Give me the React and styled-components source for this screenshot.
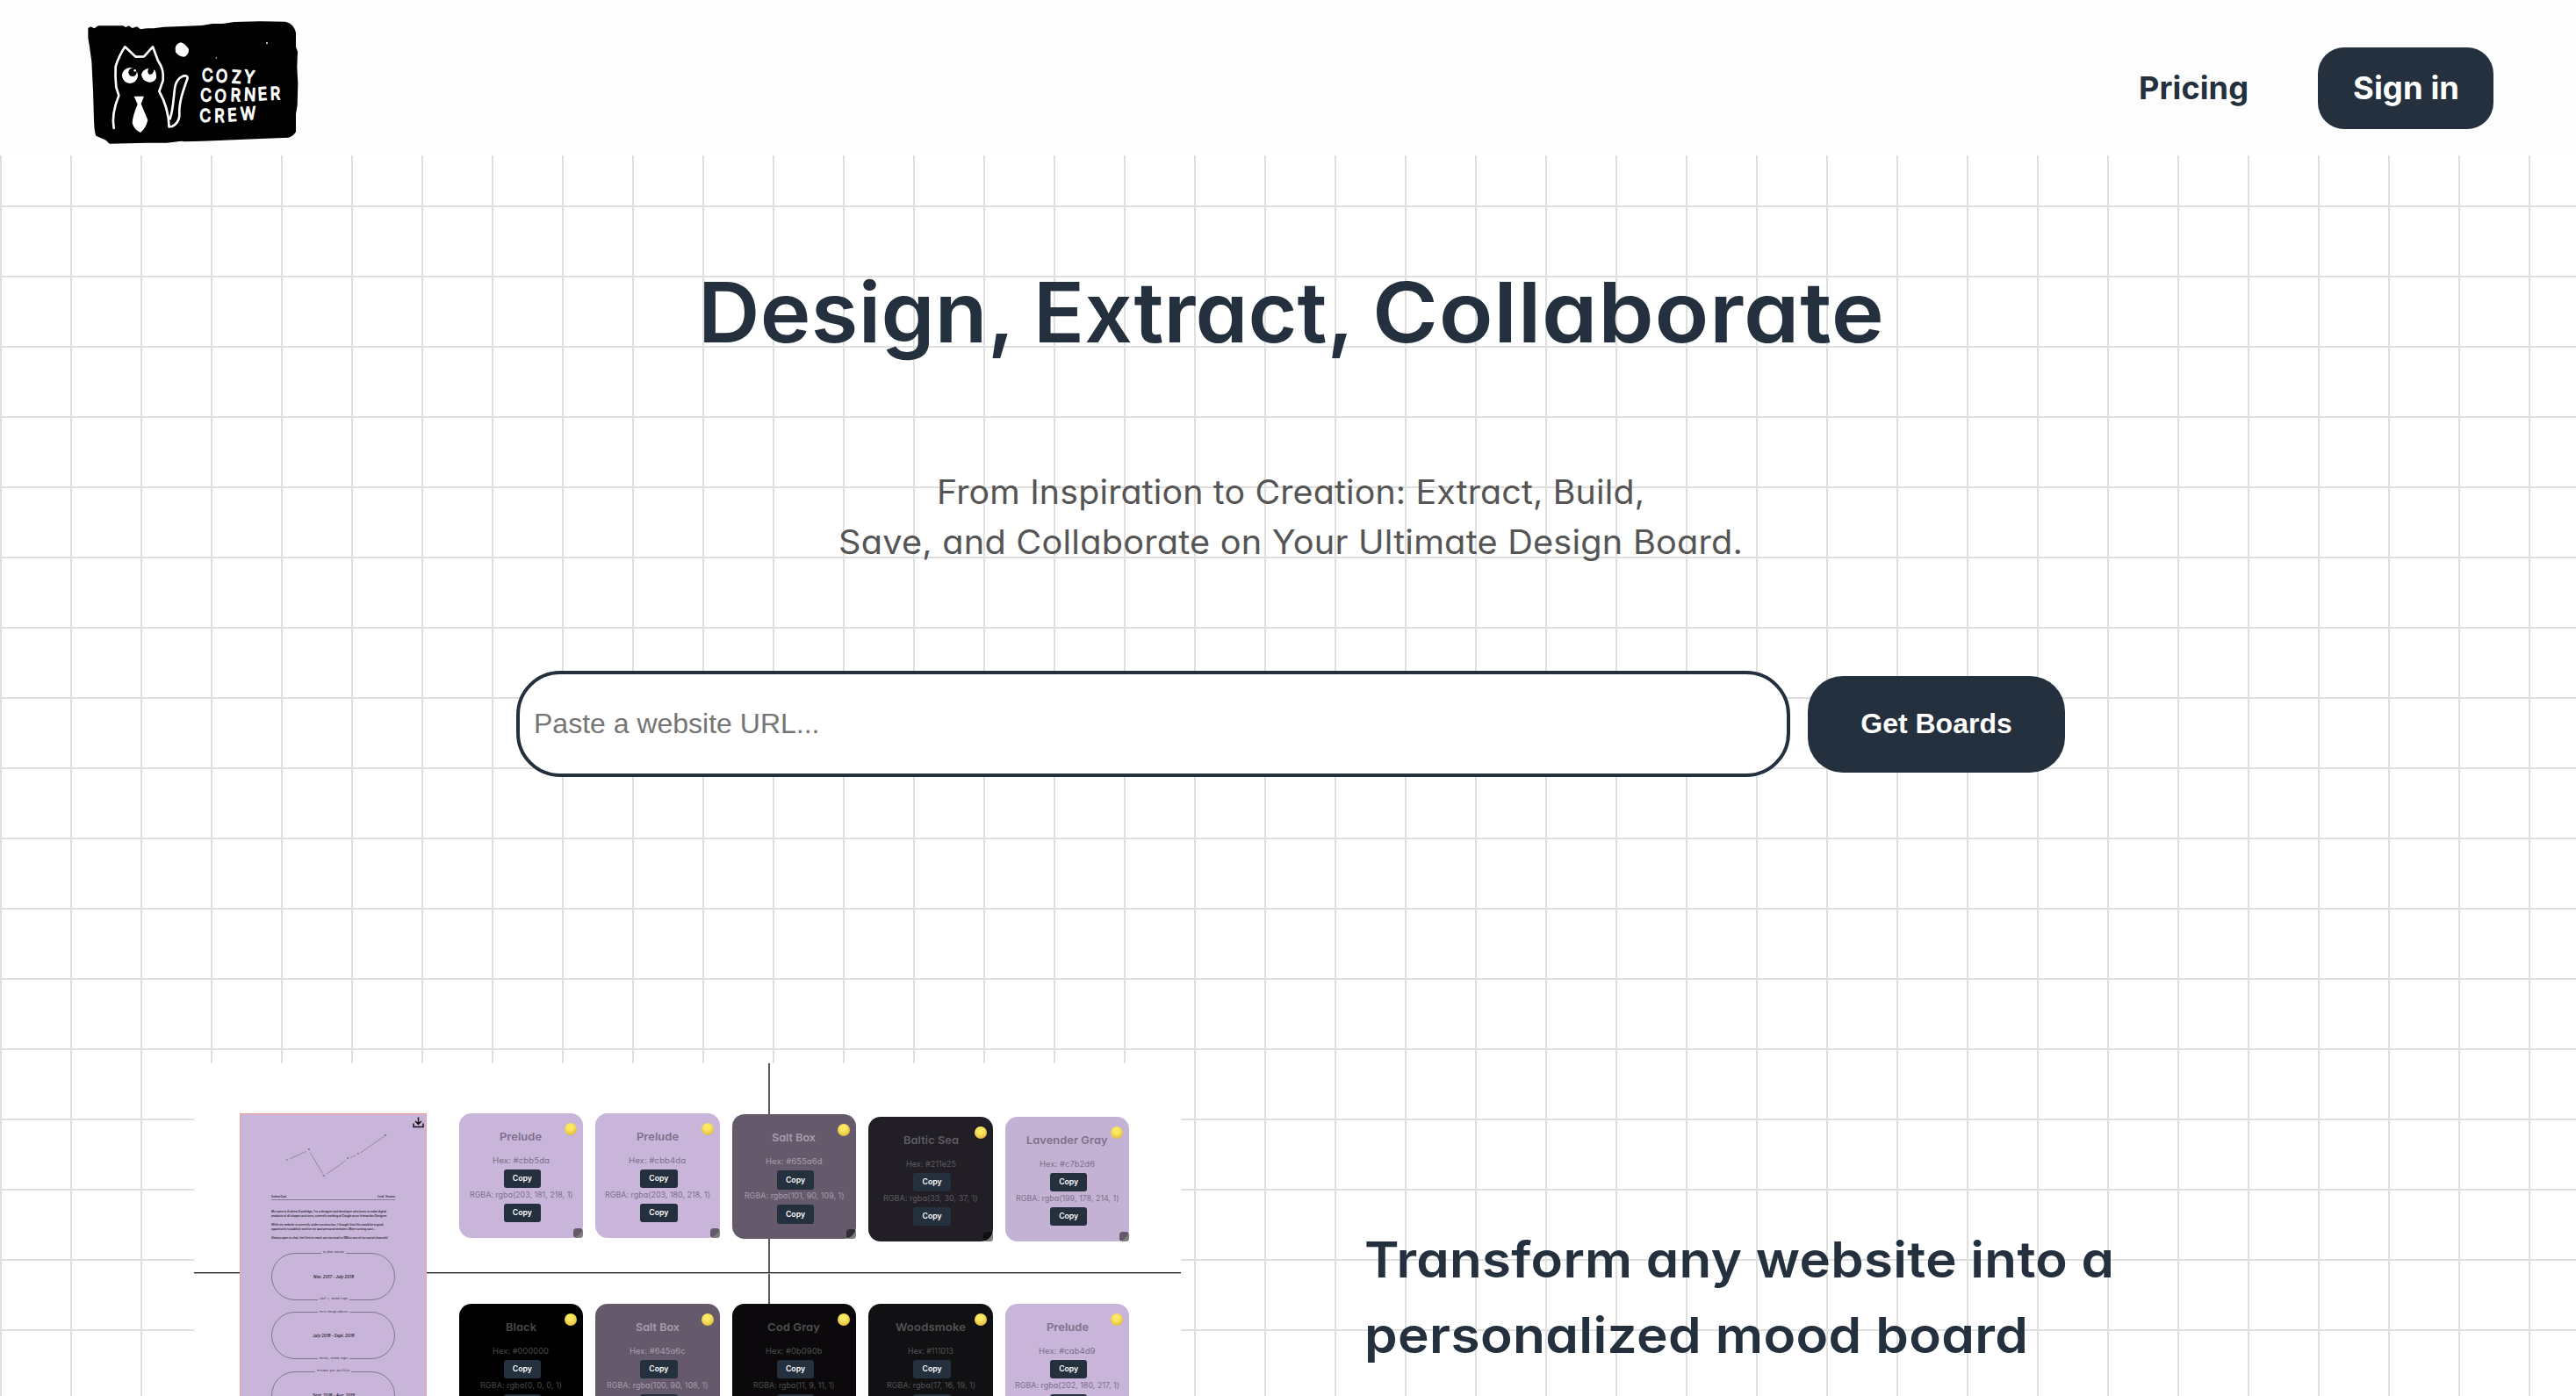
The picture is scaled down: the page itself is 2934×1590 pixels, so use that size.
import React, { useLayoutEffect, useRef, useState } from 'react';
import styled, { createGlobalStyle } from 'styled-components';

const INK = '#24303e';
const LINE = '#dfdfdf';

const GlobalStyle = createGlobalStyle`
  *, *::before, *::after { box-sizing: border-box; }
  body {
    margin: 0;
    background: #fff;
    color: ${INK};
    font-family: Inter, "Open Sans", sans-serif;
    font-feature-settings: "cv11" 1;
    overflow: hidden;
  }
  h1, h2, h3, p { margin: 0; font-weight: inherit; }
`;

const Page = styled.div`
  width: 2934px;
  height: 1590px;
  overflow: hidden;
  background-color: #fff;
  background-image:
    linear-gradient(to right, ${LINE} 2px, transparent 2px),
    linear-gradient(to bottom, ${LINE} 2px, transparent 2px);
  background-size: 80px 80px;
  background-position: 0 74px;
`;

const Measure = styled.span`
  display: block;
  text-align: left;
`;

const Stretched = styled.span`
  display: inline-block;
  vertical-align: top;
  white-space: pre;
  transform-origin: 0 50%;
`;

/* Widens one line of text to a given measure, mostly in the letters and a little between them. */
function Line({ measure, children }) {
  const ref = useRef(null);
  const [fit, setFit] = useState({ scale: 1, spacing: 0 });
  useLayoutEffect(() => {
    const natural = ref.current.getBoundingClientRect().width;
    const gaps = children.length - 1;
    const width = natural + (measure - natural) * 0.15;
    setFit({ scale: measure / width, spacing: (width - natural) / gaps });
  }, [measure, children]);
  return (
    <Measure style={{ width: measure }}>
      <Stretched ref={ref} style={{ letterSpacing: fit.spacing, transform: `scaleX(${fit.scale})` }}>
        {children}
      </Stretched>
    </Measure>
  );
}

/* ---------- header ---------- */

const Header = styled.header`
  display: flex;
  justify-content: space-between;
  align-items: flex-start;
  height: 177px;
  padding: 0 94px 0 80px;
  background: #fdfdfd;
`;

const LogoArt = styled.svg`
  width: 280px;
  height: 160px;
  margin-top: 10px;
`;

const Nav = styled.nav`
  display: flex;
  align-items: center;
  gap: 79px;
  margin-top: 54px;
  height: 93px;
  font-size: 35.5px;
  font-weight: 650;
`;

const NavLink = styled.a`
  color: ${INK};
`;

const SignIn = styled.button`
  display: flex;
  align-items: center;
  justify-content: center;
  width: 200px;
  height: 93px;
  padding: 0;
  border: 0;
  border-radius: 30px;
  background: ${INK};
  color: #fff;
  font: inherit;
  font-feature-settings: inherit;
`;

const LogoText = styled.text`
  font-family: Inter, sans-serif;
  font-size: 60px;
  font-weight: 400;
  fill: #fff;
  stroke: #fff;
  stroke-width: 4;
  stroke-linejoin: round;
`;

function Logo() {
  return (
    <LogoArt viewBox="0 0 840 480">
      <path
        d="M61 66 L70 61 L82 67 L96 58 L180 58 L190 63 L200 58 L212 66 L228 61 L240 70 L262 67 L284 67 L320 62 L380 60 L450 57 L486 51 L520 51 L560 45 L650 43 L735 44 Q764 50 771 82 L771 130 L777 146 L775 200 L778 255 L776 330 L771 360 L771 420 Q764 434 746 440 L650 444 L560 448 L450 452 L390 454 L380 452 L330 458 L260 458 L134 461 L122 449 L88 434 Q82 420 81 380 L78 280 L73 180 L66 130 L61 100 Z"
        fill="#000"
      />
      <g fill="none" stroke="#fff" strokeLinecap="round" strokeLinejoin="round">
        <path d="M149 408 C142 370 150 335 166 296 L157 268 C154 240 154 215 155 197 Q168 158 187 130 L224 164 L252 163 L282 130 L300 178 C315 200 319 215 317 245 L304 282 C322 314 336 350 338 403" strokeWidth="8" />
        <path d="M337 400 Q341 404 348 402 Q370 392 373 366 C370 320 386 280 401 237 Q401 226 385 230 Q364 238 358 266 C352 310 352 345 341 376" strokeWidth="8" />
      </g>
      <circle cx="204" cy="228" r="27" fill="#fff" />
      <circle cx="213" cy="217" r="14" fill="#000" />
      <circle cx="221" cy="211" r="4" fill="#fff" />
      <path d="M243 224 Q247 207 268 203 Q261 218 270 224 Q284 227 286 208 Q295 214 294 236 Q288 251 270 251 Q246 248 243 224 Z" fill="#fff" />
      <path d="M218 299 L252 299 L242 325 L265 380 Q259 407 240 423 Q220 416 212 391 Q213 366 230 326 Z" fill="#fff" />
      <path d="M377 115 Q391 117 405 138 Q406 158 390 164 Q372 165 360 148 Q354 121 377 115 Z" fill="#fff" />
      <circle cx="672" cy="117" r="3" fill="#fff" />
      <circle cx="499" cy="168" r="2" fill="#fff" />
      <g transform="scale(0.88 1)">
        <LogoText x="513 564 626 673" y="250 250 253 251" rotate="-5 3 3 6">COZY</LogoText>
        <LogoText x="507 560 622 674 730 777" y="318 318 315 313 313 311" rotate="-5 2 2 3 -3 -2">CORNER</LogoText>
        <LogoText x="504 560 612 662" y="388 387 385 380" rotate="-4 0 -3 -3">CREW</LogoText>
      </g>
    </LogoArt>
  );
}

/* ---------- hero ---------- */

const Hero = styled.section`
  display: flex;
  flex-direction: column;
  align-items: center;
  height: 1034px;
  padding: 107px 0 0 6px;
`;

const Title = styled.h1`
  display: flex;
  gap: 21px;
  font-size: 95px;
  line-height: 144px;
  font-weight: 640;
`;

const Subtitle = styled.p`
  display: flex;
  flex-direction: column;
  align-items: center;
  margin-top: 104px;
  font-size: 37.5px;
  line-height: 57px;
  color: #555;
`;

const UrlForm = styled.form`
  display: flex;
  align-items: center;
  gap: 20px;
  margin-top: 118px;
`;

const UrlInput = styled.input`
  width: 1451px;
  height: 121px;
  padding: 0 16px;
  border: 4px solid ${INK};
  border-radius: 50px;
  background: #fff;
  font: 32px "Liberation Sans", Arial, sans-serif;
  &::placeholder { color: #757575; opacity: 1; }
`;

const GetBoards = styled.button`
  width: 293px;
  height: 110px;
  padding: 0;
  border: 0;
  border-radius: 40px;
  background: ${INK};
  color: #fff;
  font: bold 32px "Liberation Sans", Arial, sans-serif;
`;

/* ---------- feature ---------- */

const Feature = styled.section`
  display: flex;
  align-items: flex-start;
  height: 379px;
  padding-left: 221px;
  gap: 209px;
`;

const Board = styled.div`
  display: flex;
  align-items: flex-start;
  width: 1124px;
  height: 379px;
  padding: 57px 0 0 52px;
  gap: 36.5px;
  overflow: hidden;
  background:
    linear-gradient(#202020, #202020) 0 238px / 100% 1px no-repeat,
    linear-gradient(#b4b4b4, #b4b4b4) 0 239px / 100% 1px no-repeat,
    linear-gradient(#5a5a5a, #5a5a5a) 654px 0 / 2px 100% no-repeat,
    #fff;
`;

const Poster = styled.div`
  position: relative;
  flex: none;
  width: 213px;
  height: 500px;
  padding: 0 35px;
  border: 1px solid #f0a593;
  background: #cab5da;
  color: #2a2430;
`;

const DownloadIcon = styled.svg`
  position: absolute;
  top: 3px;
  right: 2px;
  width: 13px;
  height: 13px;
`;

const Constellation = styled.svg`
  display: block;
  width: 139.5px;
  height: 92px;
  overflow: visible;
  font-family: Inter, sans-serif;
`;

const PosterBar = styled.div`
  display: flex;
  justify-content: space-between;
  height: 6px;
  border-bottom: 1px solid #8b7b97;
  font-size: 3.2px;
  line-height: 5px;
  font-weight: 600;
`;

const PosterText = styled.p`
  display: flex;
  flex-direction: column;
  margin-top: ${(p) => p.$top}px;
  font-size: 3.2px;
  line-height: 5px;
  font-weight: 600;
`;

const Pill = styled.div`
  display: flex;
  flex-direction: column;
  align-items: center;
  justify-content: space-between;
  height: 54px;
  margin-top: ${(p) => p.$top}px;
  border: 0.7px solid #84748f;
  border-radius: 27px;
`;

const PillLabel = styled.span`
  margin: -2.5px 0;
  padding: 0 2px;
  background: #cab5da;
  font: 500 2.8px/4px "Liberation Mono", monospace;
`;

const PillDate = styled.span`
  font-size: 4.7px;
  line-height: 6px;
  font-weight: 600;
  font-style: italic;
`;

const Swatches = styled.div`
  display: flex;
  flex-direction: column;
`;

const SwatchRow = styled.div`
  display: flex;
  align-items: flex-start;
  gap: 14px;
  height: 217px;
`;

const Swatch = styled.div`
  position: relative;
  display: flex;
  flex: none;
  flex-direction: column;
  align-items: center;
  width: 141.6px;
  height: 142px;
  margin-top: ${(p) => p.$drop || 0}px;
  padding-top: 18px;
  border-radius: 14px;
  background: ${(p) => p.$bg};
  color: ${(p) => p.$fg};
  font-size: 9px;
  line-height: 13px;
`;

const SwatchName = styled.h3`
  margin-bottom: 11px;
  font-size: 12.3px;
  line-height: 18px;
  font-weight: 640;
`;

const Copy = styled.button`
  width: 42.4px;
  height: 21.3px;
  margin: 4.2px 0 0.4px 3px;
  padding: 0;
  border: 0;
  border-radius: 3px;
  background: ${INK};
  color: #fff;
  font: 600 8.7px/21px Inter, sans-serif;
`;

const Moon = styled.span`
  position: absolute;
  top: 11px;
  right: 7px;
  width: 14px;
  height: 14px;
  border-radius: 50%;
  background: radial-gradient(circle at 45% 35%, #fbe964 0 25%, #edca48 62%, #bf9130 100%);
`;

const Handle = styled.span`
  position: absolute;
  right: 0;
  bottom: 0;
  width: 11px;
  height: 11px;
  border-radius: 3.5px;
  background: rgba(0, 0, 0, 0.5);
`;

const Pitch = styled.h2`
  display: flex;
  flex-direction: column;
  align-items: flex-start;
  padding-top: 181px;
  font-size: 57px;
  line-height: 86px;
  font-weight: 640;
`;

const LILAC = { bg: '#c8b5d9', fg: '#7e6f8a' };
const SALT = { bg: '#645a6b', fg: '#a79dae' };

const rows = [
  [
    { ...LILAC, name: 'Prelude', hex: '#cbb5da', rgba: '203, 181, 218, 1', w: [48, 65, 117.5] },
    { ...LILAC, name: 'Prelude', hex: '#cbb4da', rgba: '203, 180, 218, 1', w: [48, 65, 120] },
    { ...SALT, name: 'Salt Box', hex: '#655a6d', rgba: '101, 90, 109, 1', w: [50, 64.5, 113.5], drop: 1.3 },
    { bg: '#211e25', fg: '#5f5c63', name: 'Baltic Sea', hex: '#211e25', rgba: '33, 30, 37, 1', w: [63, 57, 107.5], drop: 3.7 },
    { bg: '#c4b2d4', fg: '#7e6f8a', name: 'Lavender Gray', hex: '#c7b2d6', rgba: '199, 178, 214, 1', w: [92.5, 63, 117.5], drop: 3.7 },
  ],
  [
    { bg: '#000000', fg: '#4a4a4a', name: 'Black', hex: '#000000', rgba: '0, 0, 0, 1', w: [35, 64, 93] },
    { ...SALT, name: 'Salt Box', hex: '#645a6c', rgba: '100, 90, 108, 1', w: [50, 63.5, 115.5] },
    { bg: '#0b090b', fg: '#504f50', name: 'Cod Gray', hex: '#0b090b', rgba: '11, 9, 11, 1', w: [60, 64.5, 92.5] },
    { bg: '#111113', fg: '#545355', name: 'Woodsmoke', hex: '#111013', rgba: '17, 16, 19, 1', w: [80, 52, 101] },
    { ...LILAC, name: 'Prelude', hex: '#cab4d9', rgba: '202, 180, 217, 1', w: [48, 64.5, 119] },
  ],
];

function ColorCard({ color }) {
  return (
    <Swatch $bg={color.bg} $fg={color.fg} $drop={color.drop}>
      <SwatchName><Line measure={color.w[0]}>{color.name}</Line></SwatchName>
      <Line measure={color.w[1]}>{`Hex: ${color.hex}`}</Line>
      <Copy>Copy</Copy>
      <Line measure={color.w[2]}>{`RGBA: rgba(${color.rgba})`}</Line>
      <Copy>Copy</Copy>
      <Moon />
      <Handle />
    </Swatch>
  );
}

const pills = [
  { top: 'My phone subsidie', date: 'Nov. 2017 - July 2018', foot: 'Label 1, GitHub Pages', w: [24, 46, 32] },
  { top: 'First design website', date: 'July 2018 - Sept. 2018', foot: 'Heroku, GitHub Pages', w: [32, 47.5, 32] },
  { top: 'Freshman year portfolio', date: 'Sept. 2018 - Aug. 2019', foot: 'GitHub Pages', w: [37, 48, 24] },
];

const letters = [
  ['A', 17.7, 53], ['N', 42.7, 41], ['D', 59.7, 70.5], ['R', 87, 51], ['E', 99, 46], ['W', 129.7, 24.5],
];

function SitePoster() {
  return (
    <Poster>
      <DownloadIcon viewBox="0 0 13 13" fill="none" stroke="#17131b" strokeWidth="1.5">
        <path d="M6.5 0.5V8M3 5L6.5 8.4L10 5M1 7.5V11.6H12V7.5" />
      </DownloadIcon>
      <Constellation viewBox="0 0 139.5 92">
        <path
          d="M21 51L39.5 42.5M44 43.5L58.5 67.5M62.5 68.5L84.5 53M90 49.5L96.5 46.8M101.5 44L128 25.5"
          fill="none"
          stroke="#75667f"
          strokeWidth="0.6"
        />
        {letters.map(([c, x, y]) => (
          <text key={c} x={x} y={y} fontSize="2.6" fontWeight="500" textAnchor="middle" fill="#2a2430">{c}</text>
        ))}
      </Constellation>
      <PosterBar>
        <Line measure={17}>Andrew Good</Line>
        <Line measure={20}>Email   Resume</Line>
      </PosterBar>
      <PosterText $top={10.5}>
        <Line measure={131}>My name is Andrew Goodridge, I'm a designer and developer who loves to make digital</Line>
        <Line measure={132}>products of all shapes and sizes, currently working at Google as an Interaction Designer.</Line>
      </PosterText>
      <PosterText $top={5}>
        <Line measure={127.5}>While my website is currently under construction, I thought that this would be a good</Line>
        <Line measure={119}>opportunity to publicly archive my past personal websites. More coming soon...</Line>
      </PosterText>
      <PosterText $top={5}>
        <Line measure={133}>Always open to chat, feel free to reach out via email or DM on any of my social channels!</Line>
      </PosterText>
      {pills.map((p, i) => (
        <Pill key={p.date} $top={i ? 13.5 : 14.2}>
          <PillLabel><Line measure={p.w[0]}>{p.top}</Line></PillLabel>
          <PillDate><Line measure={p.w[1]}>{p.date}</Line></PillDate>
          <PillLabel><Line measure={p.w[2]}>{p.foot}</Line></PillLabel>
        </Pill>
      ))}
    </Poster>
  );
}

export default function App() {
  return (
    <Page>
      <GlobalStyle />
      <Header>
        <Logo />
        <Nav>
          <NavLink><Line measure={125}>Pricing</Line></NavLink>
          <SignIn><Line measure={121}>Sign in</Line></SignIn>
        </Nav>
      </Header>
      <Hero>
        <Title>
          <Line measure={361}>Design,</Line>
          <Line measure={365}>Extract,</Line>
          <Line measure={583}>Collaborate</Line>
        </Title>
        <Subtitle>
          <Line measure={806}>From Inspiration to Creation: Extract, Build,</Line>
          <Line measure={1030}>Save, and Collaborate on Your Ultimate Design Board.</Line>
        </Subtitle>
        <UrlForm onSubmit={(e) => e.preventDefault()}>
          <UrlInput placeholder="Paste a website URL..." />
          <GetBoards>Get Boards</GetBoards>
        </UrlForm>
      </Hero>
      <Feature>
        <Board>
          <SitePoster />
          <Swatches>
            {rows.map((row, r) => (
              <SwatchRow key={r}>
                {row.map((c, i) => <ColorCard key={i} color={c} />)}
              </SwatchRow>
            ))}
          </Swatches>
        </Board>
        <Pitch>
          <Line measure={854}>Transform any website into a</Line>
          <Line measure={756}>personalized mood board</Line>
        </Pitch>
      </Feature>
    </Page>
  );
}
